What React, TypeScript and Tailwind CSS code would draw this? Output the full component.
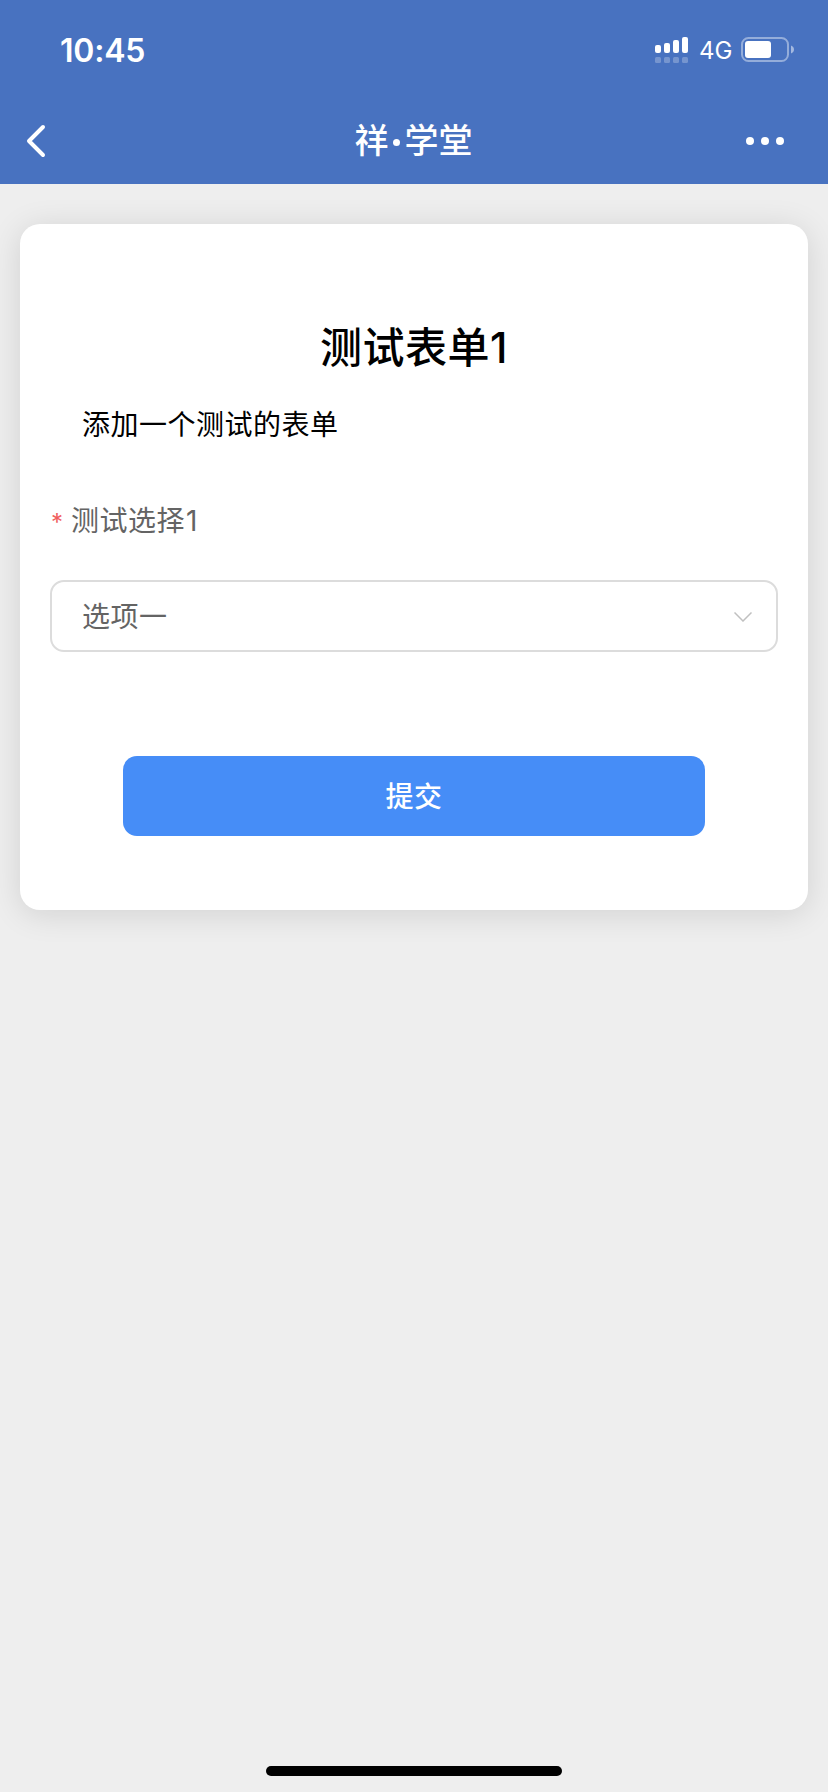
import React from 'react';

const StatusBar: React.FC = () => {
  return (
    <div className="flex h-24 items-start justify-between pl-[60px] pr-[34px] pt-[30px] font-['Inter',sans-serif]">
      <span className="pt-px text-[32px] leading-10 font-semibold tracking-[-0.2px]">10:45</span>
      <div className="flex">
        <svg className="mt-[7px]" width="34" height="27" viewBox="0 0 34 27" fill="currentColor">
          <rect x="0" y="8" width="6" height="8" rx="2" />
          <rect x="9" y="6" width="6" height="10" rx="2" />
          <rect x="18" y="3" width="6" height="13" rx="2" />
          <rect x="27" y="0" width="6" height="16" rx="2" />
          <g opacity="0.25">
            <rect x="0" y="20" width="6" height="6" rx="1.5" />
            <rect x="9" y="20" width="6" height="6" rx="1.5" />
            <rect x="18" y="20" width="6" height="6" rx="1.5" />
            <rect x="27" y="20" width="6" height="6" rx="1.5" />
          </g>
        </svg>
        <span className="ml-[10px] mt-px w-[33px] text-[24px] leading-10">4G</span>
        <svg className="ml-[9px] mt-[7px]" width="53" height="25" viewBox="0 0 53 25" fill="none">
          <rect x="1" y="1" width="46" height="23" rx="6.5" stroke="white" strokeOpacity="0.42" strokeWidth="2" />
          <rect x="4" y="4" width="26" height="17" rx="3" fill="white" />
          <path d="M50 8.5c1.8.7 3 2.2 3 4s-1.2 3.3-3 4z" fill="white" fillOpacity="0.5" />
        </svg>
      </div>
    </div>
  );
};

const NavBar: React.FC = () => {
  return (
    <div className="flex h-[88px] items-center justify-between pl-[26px] pr-[44px] pt-[2px]">
      <svg width="20" height="34" viewBox="0 0 20 34" fill="none" stroke="currentColor" strokeWidth="4" strokeLinecap="round" strokeLinejoin="round">
        <path d="M17 3 3 17l14 14" />
      </svg>
      <h1 className="mb-1 ml-[35px] flex items-center text-[34px] leading-none font-medium">
        祥<span className="flex w-4 justify-center pt-[7px]"><i className="h-[7px] w-[7px] rounded-full bg-white" /></span>学堂
      </h1>
      <div className="flex gap-[7px]">
        <i className="h-2 w-2 rounded-full bg-white" />
        <i className="h-2 w-2 rounded-full bg-white" />
        <i className="h-2 w-2 rounded-full bg-white" />
      </div>
    </div>
  );
};

const FormCard: React.FC = () => {
  return (
    <div className="mx-5 mt-10 h-[686px] rounded-[20px] bg-white px-[30px] pt-[89px] shadow-[0_4px_32px_rgba(0,0,0,0.12)]">
      <h2 className="flex h-16 items-baseline justify-center text-[42px] leading-[64px] font-medium tracking-[0.5px] text-black">
        测试表单<span className="font-['Inter',sans-serif]">1</span>
      </h2>
      <p className="mt-[26px] pl-8 text-[28px] leading-10 tracking-[0.5px] text-black">添加一个测试的表单</p>

      <div className="mt-14 flex h-10 items-baseline text-[28px] leading-10 tracking-[0.5px] text-[#646464]">
        <span className="w-[21px] pl-px font-['Inter',sans-serif] text-[24px] text-[#f05f5f]">*</span>
        测试选择<span className="pl-px font-['Inter',sans-serif]">1</span>
      </div>

      <div className="mt-[41px] flex h-[72px] items-center justify-between rounded-[14px] border-2 border-[#dcdcdc] pl-[30px] pr-6 text-[28px] text-[#646464]">
        <span className="pb-0.5 tracking-[0.5px]">选项一</span>
        <svg className="mt-0.5" width="18" height="10" viewBox="0 0 18 10" fill="none" stroke="#c0c0c0" strokeWidth="1.5">
          <path d="m.5.5 8.500 8.500 8.500-8.500" />
        </svg>
      </div>

      <button className="mx-auto mt-[104px] block h-20 w-[582px] rounded-[14px] bg-[#468df7] pb-0.5 text-[28px] font-medium tracking-[0.5px] text-white">
        提交
      </button>
    </div>
  );
};

const App: React.FC = () => {
  return (
    <div className="flex h-[1792px] w-[828px] flex-col overflow-hidden bg-[#eeeeee] font-['Noto_Sans_CJK_SC',sans-serif]">
      <header className="h-[184px] shrink-0 bg-[#4872c0] text-white">
        <StatusBar />
        <NavBar />
      </header>
      <main className="flex-1">
        <FormCard />
      </main>
      <div className="mx-auto mb-4 h-[10px] w-[296px] rounded-full bg-black" />
    </div>
  );
};

export default App;
